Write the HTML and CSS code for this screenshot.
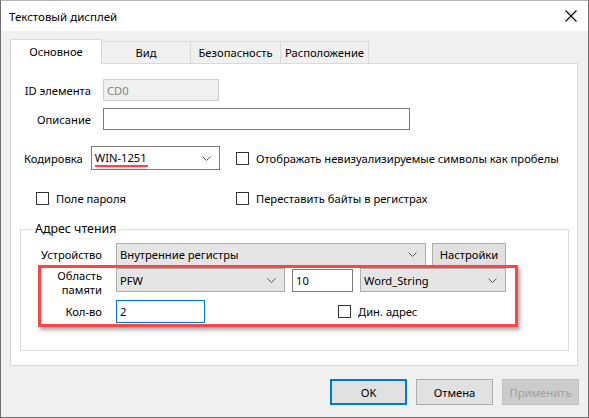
FILE: index.html
```html
<!DOCTYPE html>
<html lang="ru">

<head>
    <meta charset="UTF-8">
    <title>Текстовый дисплей</title>
    <link rel="stylesheet" href="styles.css">
</head>

<body>
    <div class="window">
        <div class="titlebar">
            <span class="title">Текстовый дисплей</span>
            <span class="close">
                <svg width="12" height="12" viewBox="0 0 12 12"><path d="M0.5 0.5 L11.5 11.5 M11.5 0.5 L0.5 11.5" stroke="#000" stroke-width="1.1" fill="none"/></svg>
            </span>
        </div>

        <div class="dialog-body">
            <div class="tabs">
                <div class="tab active">Основное</div>
                <div class="tab tab-view">Вид</div>
                <div class="tab tab-security">Безопасность</div>
                <div class="tab tab-place">Расположение</div>
            </div>

            <div class="panel">
                <div class="form-row row-id">
                    <label class="label">ID элемента</label>
                    <div class="input disabled id-input">CD0</div>
                </div>
                <div class="form-row row-desc">
                    <label class="label">Описание</label>
                    <div class="input desc-input"></div>
                </div>

                <div class="options">
                    <div class="encoding">
                        <label>Кодировка</label>
                        <div class="select white enc-select">
                            <span class="marked">WIN-1251</span>
                            <svg class="chevron" width="9" height="5" viewBox="0 0 9 5"><path d="M0.5 0.5 L4.5 4.5 L8.5 0.5" stroke="#555" fill="none"/></svg>
                        </div>
                    </div>
                    <div class="check">
                        <span class="box"></span>
                        <span>Отображать невизуализируемые символы как пробелы</span>
                    </div>
                    <div class="check check-pass">
                        <span class="box"></span>
                        <span>Поле пароля</span>
                    </div>
                    <div class="check">
                        <span class="box"></span>
                        <span>Переставить байты в регистрах</span>
                    </div>
                </div>

                <fieldset class="group">
                    <legend>Адрес чтения</legend>
                    <div class="addr-row">
                        <label class="addr-label">Устройство</label>
                        <div class="select device-select">
                            <span>Внутренние регистры</span>
                            <svg class="chevron" width="9" height="5" viewBox="0 0 9 5"><path d="M0.5 0.5 L4.5 4.5 L8.5 0.5" stroke="#555" fill="none"/></svg>
                        </div>
                        <button class="btn small-btn">Настройки</button>
                    </div>
                    <div class="highlight">
                        <div class="addr-row row-area">
                            <label class="addr-label two-lines">Область<br>памяти</label>
                            <div class="select area-select">
                                <span>PFW</span>
                                <svg class="chevron" width="9" height="5" viewBox="0 0 9 5"><path d="M0.5 0.5 L4.5 4.5 L8.5 0.5" stroke="#555" fill="none"/></svg>
                            </div>
                            <div class="input addr-input">10</div>
                            <div class="select type-select">
                                <span>Word_String</span>
                                <svg class="chevron" width="9" height="5" viewBox="0 0 9 5"><path d="M0.5 0.5 L4.5 4.5 L8.5 0.5" stroke="#555" fill="none"/></svg>
                            </div>
                        </div>
                        <div class="addr-row row-count">
                            <label class="addr-label">Кол-во</label>
                            <div class="input focused count-input">2</div>
                            <div class="check check-dyn">
                                <span class="box"></span>
                                <span>Дин. адрес</span>
                            </div>
                        </div>
                    </div>
                </fieldset>
            </div>

            <div class="footer">
                <button class="btn default">OK</button>
                <button class="btn">Отмена</button>
                <button class="btn" disabled>Применить</button>
            </div>
        </div>
    </div>
</body>

</html>
```

FILE: styles.css
```css
* {
    margin: 0;
    padding: 0;
    box-sizing: border-box;
}

body {
    font-family: "Noto Sans", "Liberation Sans", sans-serif;
    font-size: 11.2px;
    color: #000;
    background: #fff;
    white-space: nowrap;
}

.window {
    width: 589px;
    height: 418px;
    border: 1px solid #6f6f6f;
    border-top-color: #b5b5b5;
    background-color: #f0f0f0;
    display: flex;
    flex-direction: column;
}

.titlebar {
    height: 30px;
    background-color: #fff;
    display: flex;
    align-items: center;
    justify-content: space-between;
    padding: 0 11px 0 8px;
}

.title {
    font-size: 11.5px;
}

.close {
    display: flex;
    margin-top: -1px;
}

.dialog-body {
    padding: 8px 0 0 9px;
}

/* tabs */

.tabs {
    display: flex;
    align-items: flex-end;
}

.tab {
    height: 22px;
    border: 1px solid #d9d9d9;
    border-bottom: none;
    background-color: #f0f0f0;
    display: flex;
    align-items: center;
    justify-content: center;
    margin-left: -1px;
}

.tab.active {
    width: 92px;
    height: 25px;
    margin-left: 0;
    margin-bottom: -1px;
    background-color: #fff;
    position: relative;
    z-index: 1;
    padding-bottom: 2px;
}

.tab-view {
    width: 90px;
}

.tab-security {
    width: 91px;
}

.tab-place {
    width: 89px;
}

.panel {
    width: 568px;
    height: 303px;
    border: 1px solid #d9d9d9;
    background-color: #fff;
    padding-top: 15px;
}

/* rows */

.form-row {
    display: flex;
    align-items: center;
    gap: 12px;
}

.form-row .label {
    width: 80px;
    text-align: right;
}

.row-desc {
    margin-top: 7px;
}

.input {
    height: 22px;
    border: 1px solid #7a7a7a;
    background-color: #fff;
    padding: 0 3px;
    display: flex;
    align-items: center;
}

.input.disabled {
    border-color: #cccccc;
    background-color: #f0f0f0;
    color: #838383;
}

.input.focused {
    border-color: #0078d7;
}

.id-input {
    width: 116px;
}

.desc-input {
    width: 307px;
}

.options {
    display: grid;
    grid-template-columns: 225px auto;
    row-gap: 21px;
    margin-top: 16px;
    align-items: center;
}

.encoding {
    display: flex;
    align-items: center;
    gap: 8px;
    padding-left: 13px;
}

.select {
    height: 23px;
    border: 1px solid #adadad;
    background-color: #e5e5e5;
    display: flex;
    align-items: center;
    justify-content: space-between;
    padding: 0 8px 0 3px;
}

.select.white {
    background-color: #fff;
    border-color: #7a7a7a;
}

.enc-select {
    width: 129px;
    height: 24px;
}

.marked {
    border-bottom: 2px solid #f44;
    line-height: 15px;
    padding-right: 1px;
    box-shadow: 0 3px 3px -2px rgba(0, 0, 0, 0.25);
}

.chevron {
    flex-shrink: 0;
}

.check {
    display: flex;
    align-items: center;
    gap: 7px;
}

.check-pass {
    padding-left: 25px;
}

.box {
    width: 13px;
    height: 13px;
    border: 1px solid #333;
    background-color: #fff;
    flex-shrink: 0;
}

/* group box */

.group {
    margin: 15px 8px 0 9px;
    border: 1px solid #dcdcdc;
    padding: 0 0 27px 0;
}

.group legend {
    margin-left: 12px;
    padding: 0 2px;
    font-size: 12.4px;
    line-height: 16px;
}

.addr-row {
    display: flex;
    align-items: center;
}

.addr-label {
    width: 81px;
    text-align: right;
    margin-right: 14px;
}

.two-lines {
    line-height: 14px;
    padding-top: 6px;
}

.group > .addr-row {
    margin-top: 6px;
}

.device-select {
    width: 310px;
}

.small-btn {
    width: 74px;
    height: 23px;
    margin-left: 6px;
}

.highlight {
    position: relative;
    padding-top: 2px;
}

.highlight::after {
    content: "";
    position: absolute;
    left: 17px;
    top: -1px;
    width: 480px;
    height: 62px;
    box-sizing: border-box;
    border: 3px solid #f44;
    box-shadow: 2px 3px 4px rgba(0, 0, 0, 0.35);
}

.row-area {
    height: 24px;
}

.area-select {
    width: 169px;
    height: 24px;
}

.addr-input {
    width: 61px;
    height: 23px;
    margin-left: 7px;
}

.type-select {
    width: 146px;
    height: 24px;
    margin-left: 7px;
}

.row-count {
    margin-top: 8px;
}

.count-input {
    width: 89px;
    height: 23px;
}

.check-dyn {
    margin-left: 133px;
}

/* buttons */

.btn {
    font-family: inherit;
    font-size: 11.2px;
    border: 1px solid #adadad;
    background-color: #e1e1e1;
    color: #000;
}

.footer {
    display: flex;
    justify-content: flex-end;
    gap: 9px;
    margin-top: 13px;
    padding-right: 9px;
}

.footer .btn {
    width: 77px;
    height: 26px;
}

.btn.default {
    border: 2px solid #0078d7;
}

.btn:disabled {
    border-color: #bfbfbf;
    background-color: #cccccc;
    color: #a0a0a0;
}
```
